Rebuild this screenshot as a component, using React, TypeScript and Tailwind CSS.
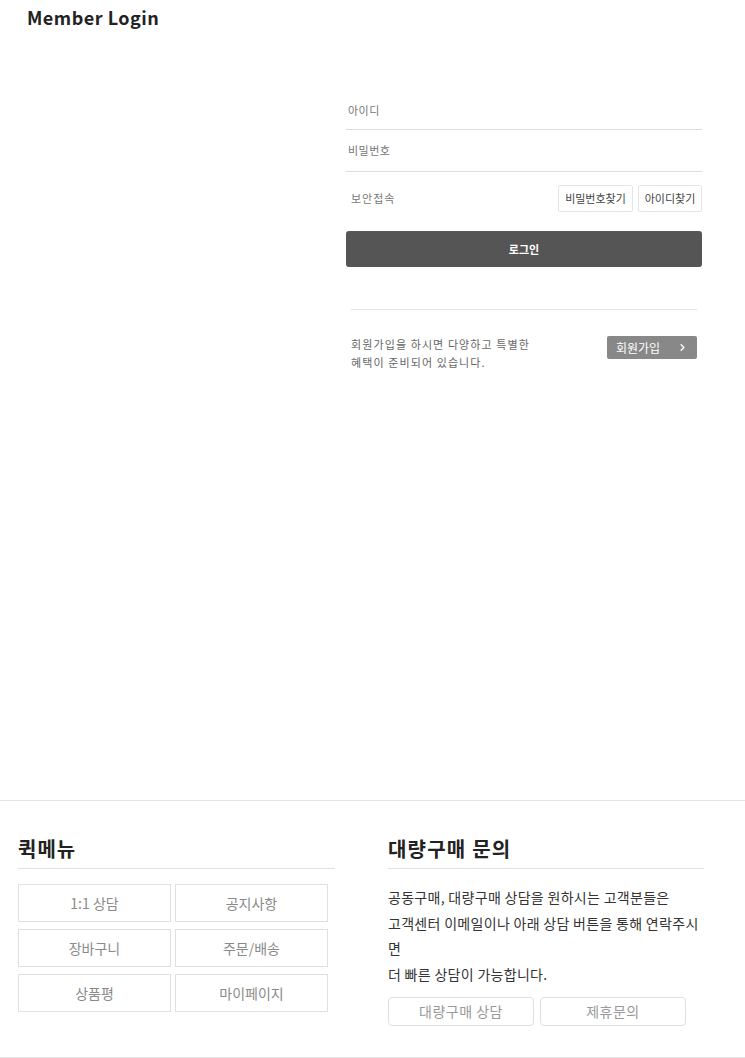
import { ChevronRight } from 'lucide-react'

const font = { fontFamily: '"Noto Sans CJK KR", "Noto Sans", sans-serif' }

const quick = ['1:1 상담', '공지사항', '장바구니', '주문/배송', '상품평', '마이페이지']

export default function App() {
    return (
        <div className="w-[745px] bg-white text-[#333]" style={font}>
            <h1 className="px-[27px] pt-[5px] text-[18px] font-bold leading-[24px] tracking-[0.5px] text-[#222]">
                Member Login
            </h1>

            <div className="ml-[346px] mt-[62px] h-[709px] w-[356px]">
                <div className="flex h-[39px] items-center border-b border-[#ddd] px-[2px] text-[11px] tracking-[0.5px] text-[#777]">
                    아이디
                </div>
                <div className="flex h-[42px] items-center border-b border-[#ddd] px-[2px] text-[11px] tracking-[0.5px] text-[#777]">
                    비밀번호
                </div>
                <div className="mt-[13px] flex items-center justify-between">
                    <span className="pl-[5px] text-[11px] tracking-[1px] text-[#777]">보안접속</span>
                    <div className="flex gap-[5px]">
                        <button className="h-[27px] w-[75px] rounded-[2px] border border-[#e5e5e5] text-[11px] text-[#444]">
                            비밀번호찾기
                        </button>
                        <button className="h-[27px] w-[64px] rounded-[2px] border border-[#e5e5e5] text-[11px] text-[#444]">
                            아이디찾기
                        </button>
                    </div>
                </div>
                <button className="mt-[19px] h-[36px] w-full rounded-[3px] bg-[#555] text-[11px] font-bold text-white">
                    로그인
                </button>

                <div className="mx-[5px] mt-[42px] border-t border-[#e5e5e5]" />
                <div className="mx-[5px] mt-[25px] flex items-start justify-between">
                    <p className="text-[11px] leading-[18px] tracking-[1.1px] text-[#666]">
                        회원가입을 하시면 다양하고 특별한
                        <br />
                        혜택이 준비되어 있습니다.
                    </p>
                    <button className="mt-[1px] flex h-[23px] w-[90px] items-center justify-between rounded-[2px] bg-[#888] pl-[9px] pr-[9px] text-[12px] text-white">
                        회원가입
                        <ChevronRight size={11} strokeWidth={3} />
                    </button>
                </div>
            </div>

            <footer className="flex border-y border-[#e5e5e5] pb-[31px] pt-[33px]">
                <section className="ml-[18px] w-[317px]">
                    <h2 className="border-b border-[#e0e0e0] pb-[5px] text-[20px] font-bold leading-[29px] tracking-[1px] text-[#222]">
                        퀵메뉴
                    </h2>
                    <div className="mt-[15px] grid w-[310px] grid-cols-2 gap-x-[4px] gap-y-[7px]">
                        {quick.map((q) => (
                            <div
                                key={q}
                                className="flex h-[38px] items-center justify-center border border-[#e0e0e0] text-[14px] text-[#8a8a8a]"
                            >
                                {q}
                            </div>
                        ))}
                    </div>
                </section>

                <section className="ml-[53px] w-[316px]">
                    <h2 className="border-b border-[#e0e0e0] pb-[5px] text-[20px] font-bold leading-[29px] tracking-[1.2px] text-[#222]">
                        대량구매 문의
                    </h2>
                    <p className="mt-[16px] text-[14px] leading-[25.5px] tracking-[0.3px] text-[#333]">
                        공동구매, 대량구매 상담을 원하시는 고객분들은
                        <br />
                        고객센터 이메일이나 아래 상담 버튼을 통해 연락주시
                        <br />
                        면
                        <br />
                        더 빠른 상담이 가능합니다.
                    </p>
                    <div className="mt-[10px] flex gap-[6px]">
                        <button className="h-[29px] w-[146px] rounded-[4px] border border-[#e0e0e0] text-[14px] tracking-[0.5px] text-[#999]">
                            대량구매 상담
                        </button>
                        <button className="h-[29px] w-[146px] rounded-[4px] border border-[#e0e0e0] text-[14px] tracking-[0.5px] text-[#999]">
                            제휴문의
                        </button>
                    </div>
                </section>
            </footer>
        </div>
    )
}
